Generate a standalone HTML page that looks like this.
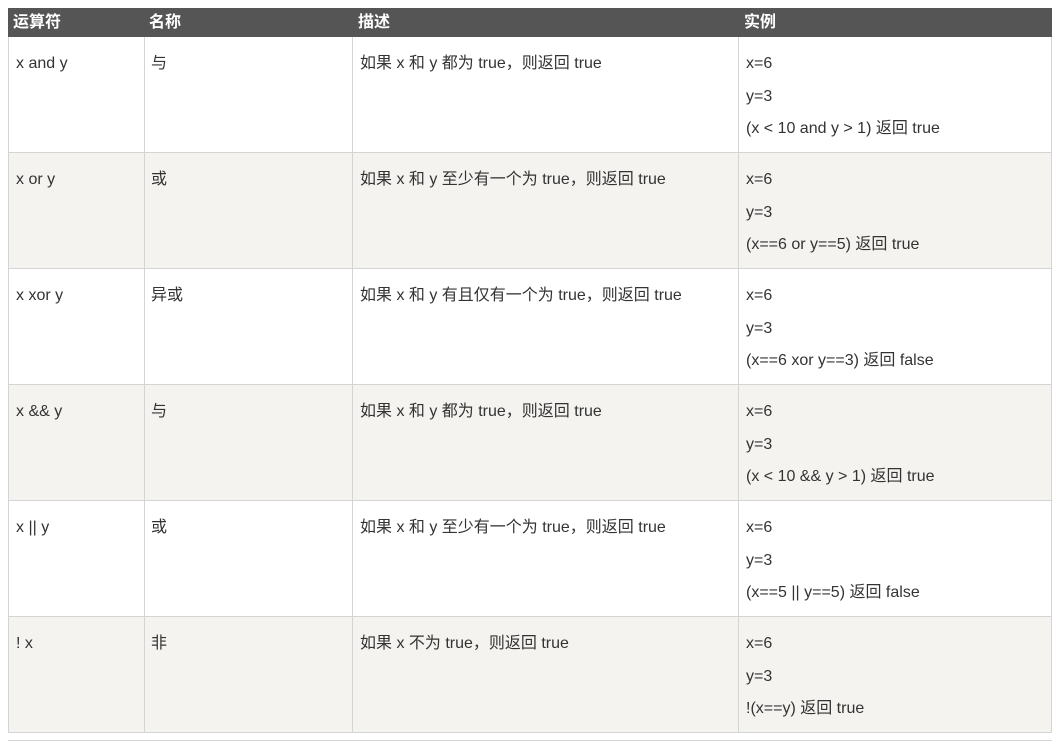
<!DOCTYPE html>
<html><head><meta charset="utf-8"><style>
body{margin:0;background:#fff;font-family:"Liberation Sans","Noto Sans CJK SC",sans-serif;font-size:16px;color:#333;}
.h{position:absolute;top:8px;left:8px;width:1044px;height:29px;background:#555;}
.ht{position:absolute;top:8px;height:29px;line-height:29px;color:#fff;font-weight:bold;font-size:16px;}
.r{position:absolute;left:8px;width:1042px;height:115px;border:1px solid #d4d4d4;border-top:none;}
.v{position:absolute;top:37px;width:1px;height:696px;background:#d4d4d4;}
.t{position:absolute;line-height:20px;white-space:nowrap;margin-top:2px;}
</style></head><body>
<div class="h"></div>
<div class="ht" style="left:13px">运算符</div>
<div class="ht" style="left:149px">名称</div>
<div class="ht" style="left:358px">描述</div>
<div class="ht" style="left:744px">实例</div>

<div class="r" style="top:37px;background:#fff"></div>
<div class="r" style="top:153px;background:#f4f3f0"></div>
<div class="r" style="top:269px;background:#fff"></div>
<div class="r" style="top:385px;background:#f4f3f0"></div>
<div class="r" style="top:501px;background:#fff"></div>
<div class="r" style="top:617px;background:#f4f3f0"></div>
<div class="v" style="left:144px"></div>
<div class="v" style="left:352px"></div>
<div class="v" style="left:738px"></div>
<div style="position:absolute;left:8px;top:740px;width:1044px;height:1px;background:#d4d4d4"></div>

<div class="t" style="left:16px;top:52px">x and y</div>
<div class="t" style="left:151px;top:52px">与</div>
<div class="t" style="left:360px;top:52px">如果 x 和 y 都为 true，则返回 true</div>
<div class="t" style="left:746px;top:52px">x=6</div>
<div class="t" style="left:746px;top:85px">y=3</div>
<div class="t" style="left:746px;top:117px">(x &lt; 10 and y &gt; 1) 返回 true</div>

<div class="t" style="left:16px;top:168px">x or y</div>
<div class="t" style="left:151px;top:168px">或</div>
<div class="t" style="left:360px;top:168px">如果 x 和 y 至少有一个为 true，则返回 true</div>
<div class="t" style="left:746px;top:168px">x=6</div>
<div class="t" style="left:746px;top:201px">y=3</div>
<div class="t" style="left:746px;top:233px">(x==6 or y==5) 返回 true</div>

<div class="t" style="left:16px;top:284px">x xor y</div>
<div class="t" style="left:151px;top:284px">异或</div>
<div class="t" style="left:360px;top:284px">如果 x 和 y 有且仅有一个为 true，则返回 true</div>
<div class="t" style="left:746px;top:284px">x=6</div>
<div class="t" style="left:746px;top:317px">y=3</div>
<div class="t" style="left:746px;top:349px">(x==6 xor y==3) 返回 false</div>

<div class="t" style="left:16px;top:400px">x &amp;&amp; y</div>
<div class="t" style="left:151px;top:400px">与</div>
<div class="t" style="left:360px;top:400px">如果 x 和 y 都为 true，则返回 true</div>
<div class="t" style="left:746px;top:400px">x=6</div>
<div class="t" style="left:746px;top:433px">y=3</div>
<div class="t" style="left:746px;top:465px">(x &lt; 10 &amp;&amp; y &gt; 1) 返回 true</div>

<div class="t" style="left:16px;top:516px">x || y</div>
<div class="t" style="left:151px;top:516px">或</div>
<div class="t" style="left:360px;top:516px">如果 x 和 y 至少有一个为 true，则返回 true</div>
<div class="t" style="left:746px;top:516px">x=6</div>
<div class="t" style="left:746px;top:549px">y=3</div>
<div class="t" style="left:746px;top:581px">(x==5 || y==5) 返回 false</div>

<div class="t" style="left:16px;top:632px">! x</div>
<div class="t" style="left:151px;top:632px">非</div>
<div class="t" style="left:360px;top:632px">如果 x 不为 true，则返回 true</div>
<div class="t" style="left:746px;top:632px">x=6</div>
<div class="t" style="left:746px;top:665px">y=3</div>
<div class="t" style="left:746px;top:697px">!(x==y) 返回 true</div>
</body></html>
